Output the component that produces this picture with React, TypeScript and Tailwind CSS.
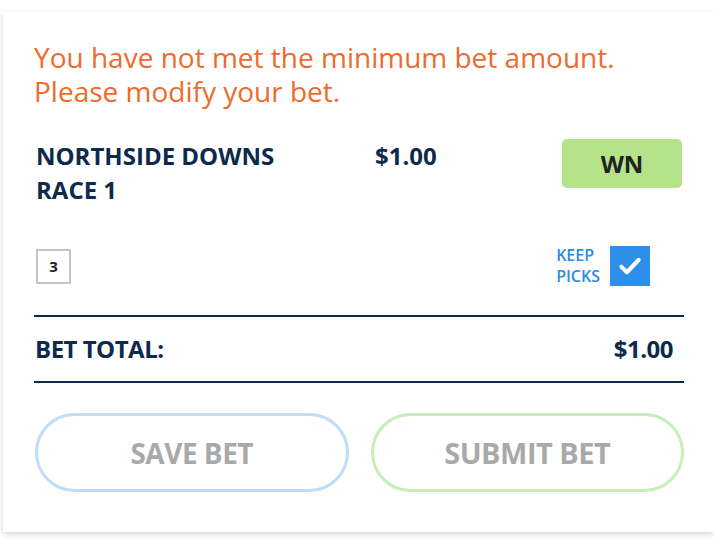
export default function App() {
  return (
    <div className="h-[544px] w-[714px] overflow-hidden bg-white pt-[12px] pl-[3px] font-['Open_Sans',sans-serif]">
      <div className="h-[520px] w-[711px] bg-white pl-[31px] pr-[30px] pt-[28px] shadow-[0_2px_6px_rgba(0,0,0,0.18)]">
        {/* Warning */}
        <div className="text-[28px] leading-[34px] text-[#ec6b2d]">
          <p>You have not met the minimum bet amount.</p>
          <p>Please modify your bet.</p>
        </div>

        {/* Race row */}
        <div className="mt-[31px] flex items-start">
          <div className="w-[341px] pl-[2px] text-[24px] font-bold leading-[34px] text-[#0e2a4b]">
            <p>NORTHSIDE DOWNS</p>
            <p>RACE 1</p>
          </div>
          <div className="text-[24px] font-bold leading-[34px] text-[#0e2a4b]">$1.00</div>
          <button className="mr-[2px] ml-auto flex h-[49px] w-[120px] items-center justify-center rounded-[5px] bg-[#b4e38a] text-[24px] font-bold text-[#222]">
            WN
          </button>
        </div>

        {/* Picks row */}
        <div className="mt-[38px] flex items-center pl-[2px] pr-[34px]">
          <div className="flex h-[35px] w-[35px] items-center justify-center border-2 border-[#c4c4c4] text-[15px] font-bold text-[#222]">
            3
          </div>
          <label className="ml-auto flex items-center gap-[10px]">
            <span className="text-[16px] font-semibold leading-[21px] text-[#2b8ae6]">
              KEEP
              <br />
              PICKS
            </span>
            <span className="flex h-[40px] w-[40px] items-center justify-center bg-[#2d8fe9]">
              <svg width="30" height="30" viewBox="0 0 24 24" fill="none" stroke="white" strokeWidth="3.2" strokeLinecap="round" strokeLinejoin="round">
                <path d="M5 12.5l4.5 4.5L19 7" />
              </svg>
            </span>
          </label>
        </div>

        {/* Total */}
        <div className="mt-[28px] flex items-center justify-between border-y-2 border-[#0e2a4b] py-[16px] pl-[1px] pr-[11px]">
          <span className="text-[24px] font-bold leading-[32px] tracking-[-0.5px] text-[#0e2a4b]">BET TOTAL:</span>
          <span className="text-[24px] font-bold leading-[32px] tracking-[-0.5px] text-[#0e2a4b]">$1.00</span>
        </div>

        {/* Actions */}
        <div className="mt-[30px] grid grid-cols-2 gap-[22px] pl-[1px]">
          <button className="h-[79px] rounded-full border-[3px] border-[#c2dcf6] text-[28px] font-bold tracking-[-0.5px] text-[#a9a9a9]">
            SAVE BET
          </button>
          <button className="h-[79px] rounded-full border-[3px] border-[#c9ecbf] text-[29px] font-bold tracking-[-0.5px] text-[#a9a9a9]">
            SUBMIT BET
          </button>
        </div>
      </div>
    </div>
  );
}
